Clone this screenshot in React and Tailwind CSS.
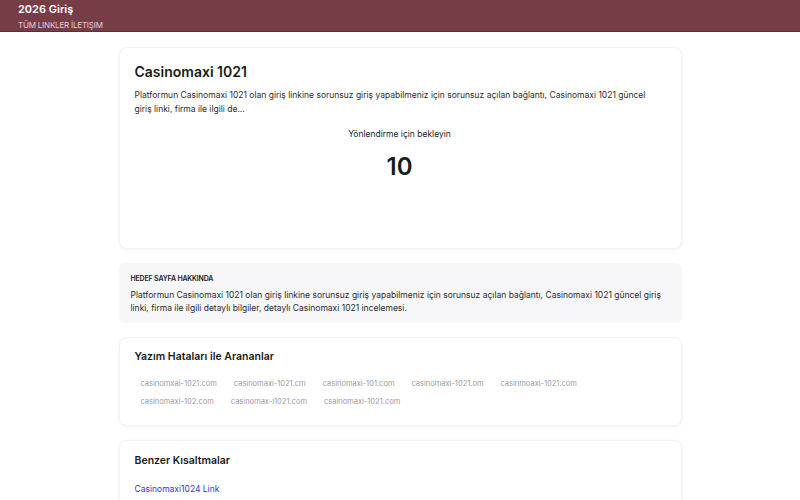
const typos = [
  "casinomxai-1021.com",
  "casinomaxi-1021.cm",
  "casinomaxi-101.com",
  "casinomaxi-1021.om",
  "casinmoaxi-1021.com",
  "casinomaxi-102.com",
  "casinomax-i1021.com",
  "csainomaxi-1021.com",
];

const desc =
  "Platformun Casinomaxi 1021 olan giriş linkine sorunsuz giriş yapabilmeniz için sorunsuz açılan bağlantı, Casinomaxi 1021 güncel giriş linki, firma ile ilgili detaylı bilgiler, detaylı Casinomaxi 1021 incelemesi.";

export default function App() {
  return (
    <div className="min-h-screen bg-white text-[#1a1a1a] font-['Inter',sans-serif]">
      <header className="h-8 bg-[#763d47] border-b border-[#5e2f39] px-[18px] pt-[2px]">
        <div className="text-[11px] font-semibold text-white leading-[14px]">2026 Giriş</div>
        <div className="mt-[4px] text-[8px] text-[#e6cdd2] leading-[10px] tracking-tight">
          TÜM LINKLER İLETIŞIM
        </div>
      </header>

      <main className="w-[563px] mx-auto pt-[15px] flex flex-col gap-[14px]">
        <section className="h-[202px] rounded-lg bg-white shadow-[0_1px_4px_rgba(0,0,0,0.05)] border border-[#f3f3f3] pl-[15px] pr-4 pt-[15px]">
          <h1 className="text-[14px] font-semibold leading-[18px]">Casinomaxi 1021</h1>
          <p className="mt-[7px] text-[8.5px] leading-[14px] text-[#2a2a2a]">
            Platformun Casinomaxi 1021 olan giriş linkine sorunsuz giriş yapabilmeniz için sorunsuz
            açılan bağlantı, Casinomaxi 1021 güncel <br />
            giriş linki, firma ile ilgili de...
          </p>
          <p className="mt-[12px] text-center text-[8.5px] leading-[12px]">Yönlendirme için bekleyin</p>
          <p className="mt-[12px] text-center text-[24px] font-semibold leading-[30px]">10</p>
        </section>

        <section className="rounded-md bg-[#f7f7fa] px-3 pt-[11px] pb-[8px]">
          <h2 className="text-[7px] font-semibold leading-[10px] tracking-tight">HEDEF SAYFA HAKKINDA</h2>
          <p className="mt-[5px] text-[8.5px] leading-[13px] text-[#2a2a2a]">{desc}</p>
        </section>

        <section className="h-[89px] rounded-lg bg-white shadow-[0_1px_4px_rgba(0,0,0,0.05)] border border-[#f3f3f3] px-[15px] pt-[12px]">
          <h3 className="text-[10.5px] font-semibold leading-[14px]">Yazım Hataları ile Arananlar</h3>
          <div className="mt-[14px] pl-[2px] flex flex-wrap gap-x-[9px] gap-y-[6px] text-[7.5px] leading-[12px] text-[#9a9a9a]">
            {typos.map((t) => (
              <span key={t} className="px-[4px]">
                {t}
              </span>
            ))}
          </div>
        </section>

        <section className="h-[80px] rounded-lg bg-white shadow-[0_1px_4px_rgba(0,0,0,0.05)] border border-[#f3f3f3] px-[15px] pt-[13px]">
          <h3 className="text-[10.5px] font-semibold leading-[14px]">Benzer Kısaltmalar</h3>
          <a href="#" className="mt-[15px] block text-[8.5px] leading-[12px] text-[#3535d0]">
            Casinomaxi1024 Link
          </a>
        </section>
      </main>
    </div>
  );
}
